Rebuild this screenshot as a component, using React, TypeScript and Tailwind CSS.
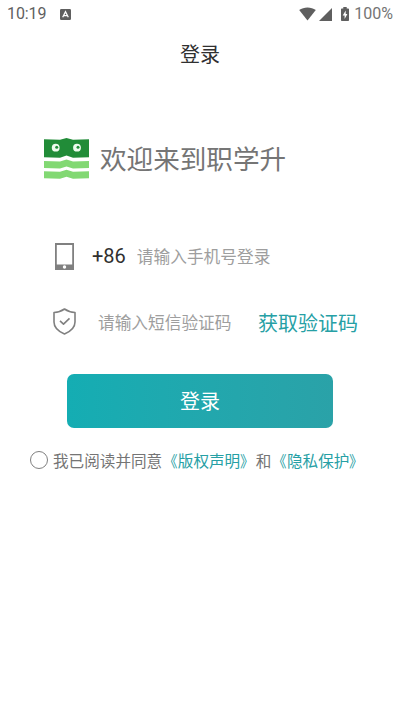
import React from 'react';

const StatusBar = () => {
  return (
    <div className="flex h-7 items-center pl-[7px] pr-[7px] text-[#5f5f5f]">
      <span className="text-[16px] leading-7 tracking-[-0.1px]">10:19</span>
      <svg className="ml-[14px] h-[11px] w-[11px]" viewBox="0 0 11 11">
        <rect width="11" height="11" rx="1.2" fill="#5f5f5f" />
        <path d="M2.7 8.2 5.5 2.7l2.8 5.5M3.8 6.6h3.4" fill="none" stroke="#fff" strokeWidth="1.3" />
      </svg>

      <div className="ml-auto flex items-center">
        <svg className="h-[14px] w-[17px]" viewBox="0 0 17 14" fill="#5f5f5f">
          <path d="M8.5 13.5.2 3C2.5 1.3 5.4.4 8.5.4s6 .9 8.3 2.6z" />
        </svg>
        <svg className="ml-[3px] h-[13px] w-[13px]" viewBox="0 0 13 13" fill="#5f5f5f">
          <path d="M0 13 13 0v13z" />
        </svg>
        <svg className="ml-[9px] h-[14px] w-[8px]" viewBox="0 0 8 14">
          <path d="M2.3 0h3.4v1.4h1.5q.8 0 .8.8v11q0 .8-.8.8H.8q-.8 0-.8-.8v-11q0-.8.8-.8h1.5z" fill="#5f5f5f" />
          <path d="M4.7 3.5 1.7 8.4h1.9v3.5L6.4 7H4.7z" fill="#fff" />
        </svg>
        <span className="ml-[5px] text-[16px] leading-7 text-[#747474]">100%</span>
      </div>
    </div>
  );
};

const Logo = () => {
  return (
    <svg className="h-[42px] w-[45px] shrink-0" viewBox="0 0 45 42">
      <path d="M0 1.3 16 1.8 22.5 0l6.5 1.8 16-.5v18l-16 .5-6.5-2.3-6.5 2.3-16-.5z" fill="#218c38" />
      <path d="M0 23l16 .5 6.5-2 6.5 2 16-.5v7l-16 .4-6.5-1.9-6.5 1.9L0 30z" fill="#82d873" />
      <path d="M0 33.3l16 .5 6.5-2 6.5 2 16-.5v7l-16 .4-6.5-1.9-6.5 1.9-16-.4z" fill="#82d873" />
      <circle cx="11.7" cy="9.7" r="3.9" fill="#eefbee" />
      <circle cx="33" cy="9.7" r="3.9" fill="#eefbee" />
      <circle cx="12.7" cy="9.2" r="1.5" fill="#218c38" />
      <circle cx="34" cy="9.2" r="1.5" fill="#218c38" />
    </svg>
  );
};

const PhoneIcon = () => {
  return (
    <svg className="h-[27px] w-[19px] shrink-0" viewBox="0 0 19 27">
      <path d="M0 0h19v27H0zM1.8 2v19.5h15.4V2z" fill="#808080" fillRule="evenodd" />
      <circle cx="9.5" cy="24" r="1.7" fill="#fff" />
    </svg>
  );
};

const ShieldIcon = () => {
  return (
    <svg
      className="h-[27px] w-[23px] shrink-0"
      viewBox="0 0 23 27"
      fill="none"
      stroke="#808080"
      strokeWidth="1.6"
      strokeLinejoin="round"
    >
      <path d="M11.5 1Q16 4.2 22 4.5V14c0 5.5-4.5 9.5-10.5 12C5.5 23.5 1 19.5 1 14V4.5Q7 4.2 11.5 1z" />
      <path d="m7 12.8 3.5 3.3 6-5.8" />
    </svg>
  );
};

interface TermsLinkProps {
  title: string;
}

const TermsLink = ({ title }: TermsLinkProps) => {
  return (
    <a className="text-[#26a0a5]">
      <span className="inline-block origin-right scale-x-90">《</span>
      {title}
      <span className="inline-block origin-left scale-x-90">》</span>
    </a>
  );
};

const App = () => {
  return (
    <div
      lang="zh-CN"
      className="h-[711px] w-[400px] overflow-hidden bg-white font-[Roboto,'Noto_Sans_CJK_SC',sans-serif]"
    >
      <StatusBar />

      <header className="flex h-[50px] items-center justify-center pt-[3px] text-[20px] text-[#303030]">登录</header>

      <div className="mt-[58px] flex h-[46px] items-center pl-[44px]">
        <Logo />
        <h1 className="ml-[11px] whitespace-nowrap pt-px text-[26.6px] leading-[46px] text-[#757575]">欢迎来到职学升</h1>
      </div>

      <div className="mt-[57px] flex h-[34px] items-center pl-[55px]">
        <PhoneIcon />
        <span className="ml-[18px] text-[20px] text-[#303030]">+86</span>
        <input
          type="tel"
          placeholder="请输入手机号登录"
          className="ml-[11px] w-[180px] bg-transparent pt-[3px] text-[16.7px] outline-none placeholder:text-[#9e9e9e]"
        />
      </div>

      <div className="mt-[31px] flex h-[34px] items-center pl-[53px]">
        <ShieldIcon />
        <input
          type="text"
          placeholder="请输入短信验证码"
          className="ml-[22px] w-[160px] bg-transparent pt-[5px] text-[16.7px] outline-none placeholder:text-[#9e9e9e]"
        />
        <button className="whitespace-nowrap pt-[5px] text-[20px] text-[#26a0a5]">获取验证码</button>
      </div>

      <button className="ml-[67px] mt-[36px] flex h-[54px] w-[266px] items-center justify-center rounded-[7px] bg-linear-to-r from-[#14adb3] to-[#2aa2a8] pt-[2px] text-[20px] text-white">
        登录
      </button>

      <div className="mt-[16px] flex h-8 items-center pl-[30px] text-[15.6px] text-[#757575]">
        <span className="h-[18px] w-[18px] shrink-0 rounded-full border-[1.5px] border-[#808080]" />
        <p className="ml-[5px] whitespace-nowrap pt-[1px] font-['Noto_Sans_CJK_SC',sans-serif]">
          我已阅读并同意
          <TermsLink title="版权声明" />
          和
          <TermsLink title="隐私保护" />
        </p>
      </div>
    </div>
  );
};

export default App;
